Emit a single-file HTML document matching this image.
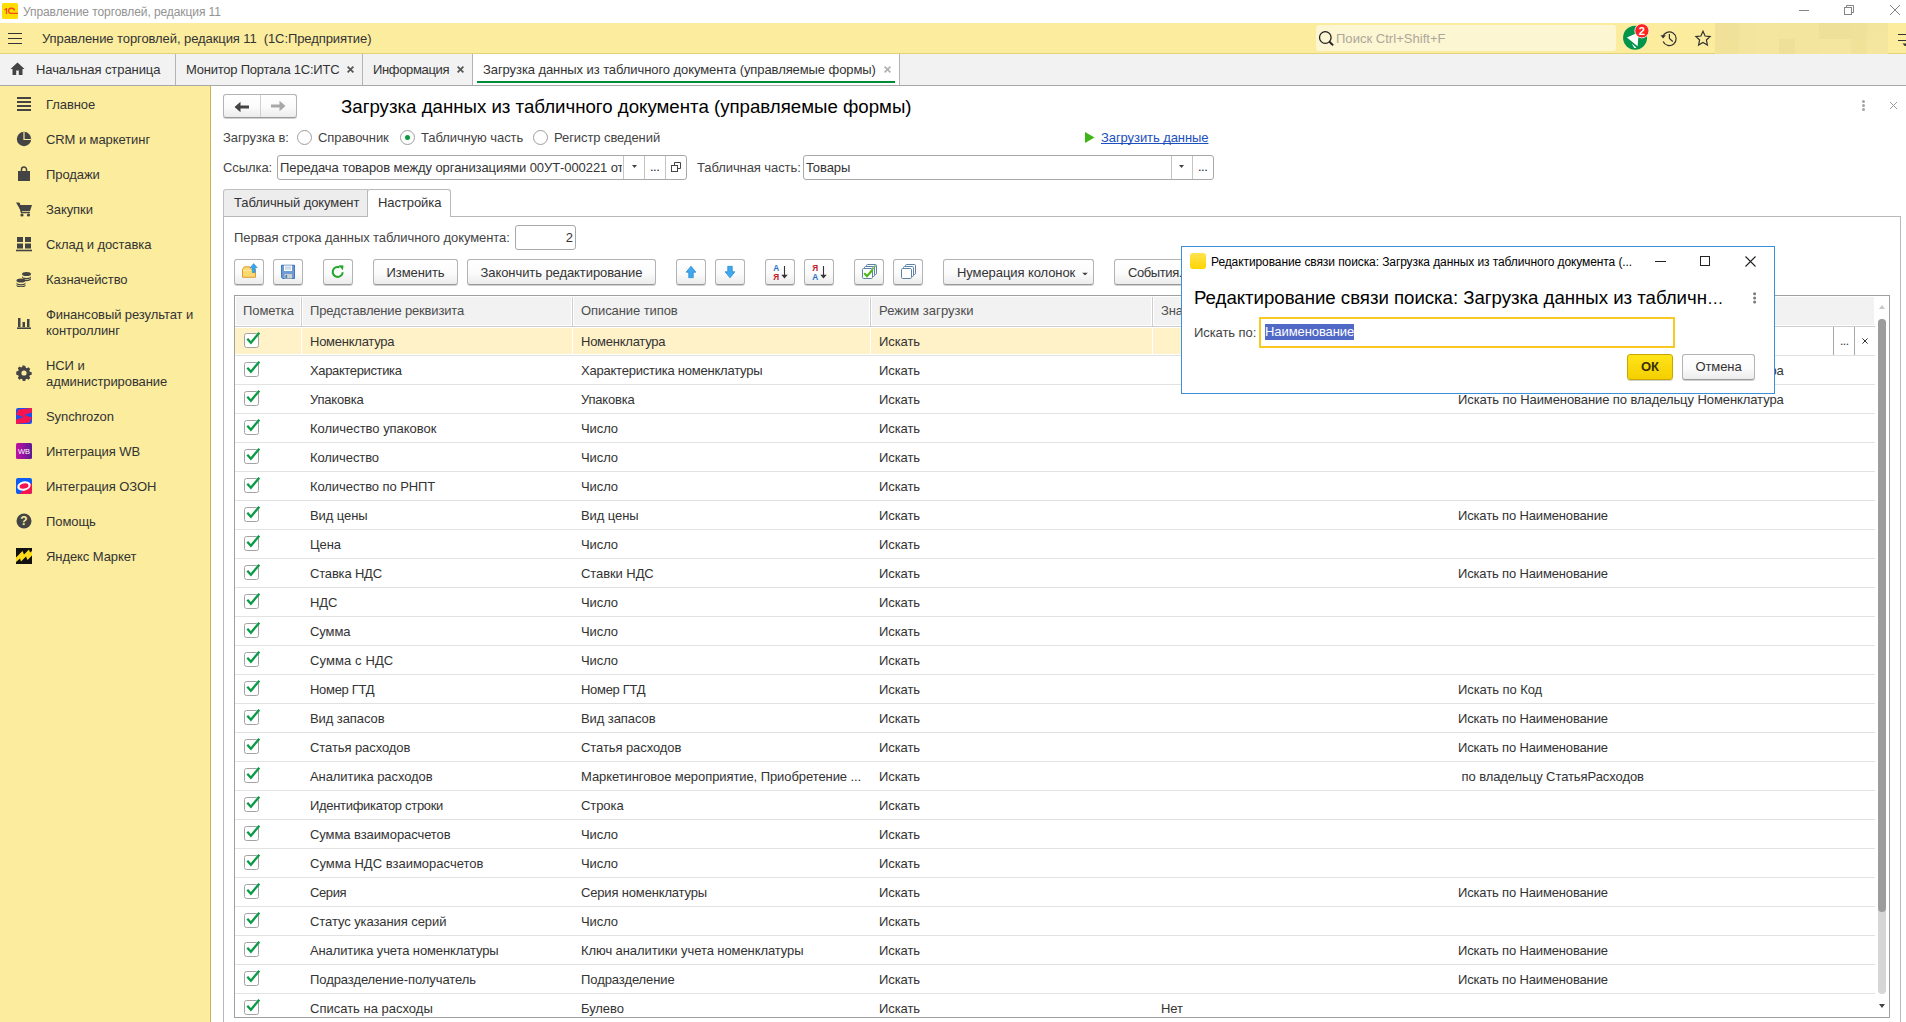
<!DOCTYPE html>
<html lang="ru">
<head>
<meta charset="utf-8">
<title>Управление торговлей, редакция 11</title>
<style>
*{box-sizing:border-box;margin:0;padding:0}
html,body{width:1906px;height:1022px;overflow:hidden;background:#fff}
body{font-family:"Liberation Sans",sans-serif;font-size:13px;color:#333;position:relative;letter-spacing:-0.08px}
.abs{position:absolute}
/* title bar */
#titlebar{position:absolute;left:0;top:0;width:1906px;height:23px;background:#fff}
#titlebar .ttl{position:absolute;left:23px;top:4px;font-size:12px;color:#939393;line-height:16px;white-space:pre}
/* yellow bar */
#topbar{position:absolute;left:0;top:23px;width:1906px;height:31px;background:#fbec9e;border-bottom:1px solid #e3d27c}
#topbar .name{position:absolute;left:42px;top:8px;line-height:16px;white-space:pre;color:#333}
#search{position:absolute;left:1316px;top:2px;width:300px;height:26px;background:#fdf6d2;border-radius:3px}
#search .ph{position:absolute;left:20px;top:6px;line-height:16px;color:#aca79a;letter-spacing:0.03px}
/* tabs bar */
#tabs{position:absolute;left:0;top:54px;width:1906px;height:32px;background:#f2f2f2;border-bottom:1px solid #a8a8a8}
#tabs .tab{position:absolute;top:0;height:31px;border-right:1px solid #b4b4b4;line-height:31px;white-space:pre;color:#333}
#tabs .tab .x{position:absolute;top:0;font-size:13px;font-weight:bold;color:#555}
/* sidebar */
#side{position:absolute;left:0;top:86px;width:211px;height:936px;background:#fbec9e;border-right:1px solid #c9b458}
.si{position:absolute;left:0;width:210px;height:40px}
.si .ic{position:absolute;left:16px;top:11px;width:17px;height:16px}
.si .ic svg{display:block}
.si .st{position:absolute;left:46px;top:0;height:40px;display:flex;align-items:center;line-height:16px;color:#333;white-space:nowrap}
/* main */
#main{position:absolute;left:211px;top:86px;width:1695px;height:936px;background:#fff}
.btn{position:absolute;height:25px;border:1px solid #b3b3b3;border-bottom-color:#9a9a9a;border-radius:3px;background:linear-gradient(#fff 0%,#fbfbfb 55%,#ececec 100%);box-shadow:0 1px 0 rgba(0,0,0,.18);text-align:center;line-height:23px;color:#333;white-space:pre}
.btn svg{position:absolute;left:50%;top:50%;transform:translate(-50%,-50%)}
.lbl{position:absolute;line-height:16px;white-space:pre;color:#444}
.inp{position:absolute;height:25px;border:1px solid #a8a8a8;border-radius:3px;background:#fff}
.inp .v{position:absolute;left:2px;top:4px;line-height:16px;white-space:pre;overflow:hidden;color:#333}
.inp .sep{position:absolute;top:0;width:1px;height:23px;background:#c4c4c4}
.radio{position:absolute;width:15px;height:15px;border:1px solid #9e9e9e;border-radius:50%;background:#fff}
.radio.on::after{content:"";position:absolute;left:4px;top:4px;width:5px;height:5px;border-radius:50%;background:#0a9a3c}
.btn.tb{top:259px;height:26px;line-height:24px;padding-top:1px}
/* table */
#grid{position:absolute;left:234px;top:295px;width:1656px;height:723px;border:1px solid #a0a0a0;background:#fff}
.hc{position:absolute;top:297px;height:28px;background:#f2f2f2}
.hc span{position:absolute;top:6px;line-height:16px;color:#4d4d4d;white-space:pre}
.tr{position:absolute;left:235px;width:1640px;height:29px;border-bottom:1px solid #e2e2e2}
.tr.last{height:23px;border-bottom:none;overflow:hidden}
.tr .sb{position:absolute;top:1px;height:26px;background:#fff2c8}
.tr .c{position:absolute;top:0;height:28px}
.tr .c.t{top:7px;line-height:16px;white-space:pre;color:#333}
.tr .ck{position:absolute;left:0;top:0}
/* dialog */
#dlg{position:absolute;left:1181px;top:246px;width:594px;height:148px;background:#fff;border:1px solid #3c8fd9}
</style>
</head>
<body>

<!-- ===== OS title bar ===== -->
<div id="titlebar">
  <svg class="abs" style="left:2px;top:3px" width="16" height="16" viewBox="0 0 16 16"><rect width="16" height="16" rx="1.500" fill="#ffdd00"/><path d="M2.300 6.400L4.100 4.900h1V11H3.800V6.700l-1.500 .900z" fill="#f4481c"/><path d="M12.500 7.600A3 2.600 0 1 0 9.600 10.450H16" fill="none" stroke="#f4481c" stroke-width="1.300"/></svg>
  <span class="ttl">Управление торговлей, редакция 11</span>
  <svg class="abs" style="left:1799px;top:5px" width="12" height="12" viewBox="0 0 12 12"><path d="M0 5.500h10" stroke="#858585" stroke-width="1"/></svg>
  <svg class="abs" style="left:1843px;top:4px" width="12" height="12" viewBox="0 0 12 12"><path d="M3.500 3.500V1.500h7v7H8.500" fill="none" stroke="#858585"/><rect x="1.500" y="3.500" width="7" height="7" fill="none" stroke="#858585"/></svg>
  <svg class="abs" style="left:1889px;top:4px" width="12" height="12" viewBox="0 0 12 12"><path d="M1 1l10 10M11 1L1 11" stroke="#858585" stroke-width="1"/></svg>
</div>

<!-- ===== application bar ===== -->
<div id="topbar">
  <svg class="abs" style="left:8px;top:9px" width="15" height="13" viewBox="0 0 15 13"><path d="M0 1.500h14M0 6.500h14M0 11.500h14" stroke="#333" stroke-width="1.200"/></svg>
  <span class="name">Управление торговлей, редакция 11  (1С:Предприятие)</span>
  <div id="search">
    <svg class="abs" style="left:2px;top:5px" width="17" height="17" viewBox="0 0 17 17"><circle cx="7.300" cy="7.500" r="5.800" fill="none" stroke="#222" stroke-width="1.300"/><path d="M11.500 11.800l3.600 3.600" stroke="#222" stroke-width="2"/></svg>
    <span class="ph">Поиск Ctrl+Shift+F</span>
  </div>
  <svg class="abs" style="left:1622px;top:0px" width="28" height="30" viewBox="0 0 28 30"><circle cx="13.050" cy="14.800" r="12" fill="#00954a"/><path d="M4.900 14.600L16.800 9.300l-1.200 13.900z" fill="#fff"/><path d="M9.900 21.100l2.400 3.900 2.200-.300-3.800-3.400z" fill="#fff"/><circle cx="19.900" cy="7.800" r="7.100" fill="#ff2222" stroke="#fff" stroke-width=".800"/><text x="19.900" y="12.100" font-family="Liberation Sans, sans-serif" font-size="11.200" font-weight="bold" fill="#fff" text-anchor="middle">2</text></svg>
  <svg class="abs" style="left:1660px;top:6px" width="19" height="19" viewBox="0 0 19 19"><path d="M2.800 7.800A6.800 6.800 0 1 1 3.100 12.600" fill="none" stroke="#333" stroke-width="1.200"/><path d="M0.500 6.200h5.400l-2.800 3.400z" fill="#333"/><path d="M9.400 5v4.500l3.400 3" fill="none" stroke="#333" stroke-width="1.200"/></svg>
  <svg class="abs" style="left:1694px;top:6px" width="18" height="18" viewBox="0 0 18 18"><path d="M9 2.300l2.100 4.700 5 .550-3.700 3.400 1 5L9 13.400l-4.400 2.550 1-5-3.700-3.400 5-.550z" fill="none" stroke="#333" stroke-width="1.200" stroke-linejoin="miter"/></svg>
  <div class="abs" style="left:1715px;top:0;width:173px;height:32px;background:#f1e29a;overflow:hidden"><i style="position:absolute;left:0px;top:0;width:24px;height:16px;background:#f0e19a"></i><i style="position:absolute;left:0px;top:16px;width:24px;height:16px;background:#f1e29a"></i><i style="position:absolute;left:24px;top:0;width:16px;height:16px;background:#f3e59d"></i><i style="position:absolute;left:24px;top:16px;width:16px;height:16px;background:#f3e59d"></i><i style="position:absolute;left:40px;top:0;width:24px;height:16px;background:#f4e69e"></i><i style="position:absolute;left:40px;top:16px;width:24px;height:16px;background:#f4e69e"></i><i style="position:absolute;left:64px;top:0;width:16px;height:16px;background:#f3e59d"></i><i style="position:absolute;left:64px;top:16px;width:16px;height:16px;background:#efe099"></i><i style="position:absolute;left:80px;top:0;width:24px;height:16px;background:#f3e59d"></i><i style="position:absolute;left:80px;top:16px;width:24px;height:16px;background:#f3e59d"></i><i style="position:absolute;left:104px;top:0;width:32px;height:16px;background:#efe099"></i><i style="position:absolute;left:104px;top:16px;width:32px;height:16px;background:#f4e69e"></i><i style="position:absolute;left:136px;top:0;width:16px;height:16px;background:#f0e19a"></i><i style="position:absolute;left:136px;top:16px;width:16px;height:16px;background:#f1e29a"></i><i style="position:absolute;left:152px;top:0;width:32px;height:16px;background:#f3e59d"></i><i style="position:absolute;left:152px;top:16px;width:32px;height:16px;background:#f4e69e"></i></div>
  <svg class="abs" style="left:1898px;top:10px" width="8" height="14" viewBox="0 0 8 14"><path d="M0 1.500h8M0 7.500h8" stroke="#333" stroke-width="1.100"/><path d="M4.500 10.500h3.500v2.500h-1.200z" fill="#333"/></svg>
</div>

<!-- ===== open-windows tab bar ===== -->
<div id="tabs">
  <div class="tab" style="left:0;width:176px"><svg class="abs" style="left:10px;top:8px" width="15" height="14" viewBox="0 0 15 14"><path d="M7.500 0.500L0.500 7h2v6h3.700V8.500h2.600V13h3.700V7h2z" fill="#444"/></svg><span class="abs" style="left:36px">Начальная страница</span></div>
  <div class="tab" style="left:176px;width:187px"><span class="abs" style="left:10px;letter-spacing:-0.230px">Монитор Портала 1С:ИТС</span><svg class="abs" style="left:171px;top:12px" width="7" height="7" viewBox="0 0 7 7"><path d="M0.600 0.600l5.800 5.800M6.400 0.600L0.600 6.400" stroke="#555" stroke-width="1.700"/></svg></div>
  <div class="tab" style="left:363px;width:110px"><span class="abs" style="left:10px;letter-spacing:-0.350px">Информация</span><svg class="abs" style="left:94px;top:12px" width="7" height="7" viewBox="0 0 7 7"><path d="M0.600 0.600l5.800 5.800M6.400 0.600L0.600 6.400" stroke="#555" stroke-width="1.700"/></svg></div>
  <div class="tab" style="left:473px;width:427px;background:#fff"><span class="abs" style="left:10px">Загрузка данных из табличного документа (управляемые формы)</span><svg class="abs" style="left:411px;top:12px" width="7" height="7" viewBox="0 0 7 7"><path d="M0.600 0.600l5.800 5.800M6.400 0.600L0.600 6.400" stroke="#b2b2b2" stroke-width="1.700"/></svg><div class="abs" style="left:4px;top:27px;width:418px;height:2px;background:#008c37"></div></div>
</div>

<!-- ===== section sidebar ===== -->
<div id="side">
<div class="si" style="top:-1px"><span class="ic"><svg width="16" height="16" viewBox="0 0 16 16"><path d="M1 2h14M1 6h14M1 10h14M1 14h14" stroke="#444" stroke-width="2"/></svg></span><span class="st">Главное</span></div>
<div class="si" style="top:34px"><span class="ic"><svg width="16" height="16" viewBox="0 0 16 16"><circle cx="8" cy="8" r="7.200" fill="#444"/><path d="M8 1v7.500h7" fill="none" stroke="#fbec9e" stroke-width="1.200"/></svg></span><span class="st">CRM и маркетинг</span></div>
<div class="si" style="top:69px"><span class="ic"><svg width="16" height="16" viewBox="0 0 16 16"><path d="M2 5h12v10H2z" fill="#444"/><path d="M5.5 7V3.5a2.5 2.5 0 0 1 5 0V7" fill="none" stroke="#444" stroke-width="1.5"/></svg></span><span class="st">Продажи</span></div>
<div class="si" style="top:104px"><span class="ic"><svg width="17" height="16" viewBox="0 0 17 16"><path d="M0 1.5h3l1 2.5h12l-2 6H5z" fill="#444"/><path d="M3 2l2.5 9.5H14" fill="none" stroke="#444" stroke-width="1.5"/><circle cx="6" cy="14" r="1.6" fill="#444"/><circle cx="12.5" cy="14" r="1.6" fill="#444"/></svg></span><span class="st">Закупки</span></div>
<div class="si" style="top:139px"><span class="ic"><svg width="16" height="16" viewBox="0 0 16 16"><path d="M1 1h6v5H1zM9 1h6v5H9zM1 7.5h6v5H1zM9 7.5h6v5H9z" fill="#444"/><path d="M0 14.5h16" stroke="#444" stroke-width="1.6"/></svg></span><span class="st">Склад и доставка</span></div>
<div class="si" style="top:174px"><span class="ic"><svg width="16" height="16" viewBox="0 0 16 16"><g fill="#444"><ellipse cx="10.5" cy="3" rx="4.5" ry="2"/><path d="M6 5c0 1.1 2 2 4.5 2S15 6.100 15 5v1.200c0 1.100-2 2-4.500 2S6 7.300 6 6.200z"/><path d="M9 8.800c2.500.3 6-.5 6-1.800v1.300c0 1.300-3 2.200-6 1.800z"/><ellipse cx="5" cy="9.500" rx="4.500" ry="2"/><path d="M.5 11.200c0 1.100 2 2 4.500 2s4.500-.9 4.500-2v1.300c0 1.100-2 2-4.500 2s-4.500-.9-4.500-2z"/><path d="M.5 13.800c0 1.100 2 2 4.500 2s4.500-.9 4.500-2V15c0 1.100-2 2-4.500 2S.5 16.100.5 15z" transform="translate(0 -0.500)"/></g></svg></span><span class="st">Казначейство</span></div>
<div class="si" style="top:217px"><span class="ic"><svg width="16" height="16" viewBox="0 0 16 16"><path d="M2 4h2.500v9H2zM6.500 8h2.500v5H6.500zM11 5h2.500v8H11z" fill="#444"/><path d="M1 14.200h14" stroke="#444" stroke-width="1.600"/></svg></span><span class="st">Финансовый результат и<br>контроллинг</span></div>
<div class="si" style="top:268px"><span class="ic"><svg width="16" height="16" viewBox="-0.6 -0.6 17.2 17.2"><path d="M8 0.500l1.300 0 .5 2 1.300.6 1.800-1 1.800 1.800-1 1.800.6 1.300 2 .5v2.600l-2 .5-.6 1.300 1 1.800-1.800 1.800-1.800-1-1.300.6-.5 2H6.700l-.5-2-1.300-.6-1.800 1-1.800-1.800 1-1.800-.6-1.300-2-.5V6.700l2-.5.6-1.300-1-1.800 1.800-1.800 1.800 1 1.300-.6.5-2z" fill="#444" transform="translate(0 -0.300)"/><circle cx="8" cy="8" r="2.800" fill="#fbec9e"/></svg></span><span class="st">НСИ и<br>администрирование</span></div>
<div class="si" style="top:311px"><span class="ic"><svg width="16" height="16" viewBox="0 0 16 16"><rect width="16" height="16" rx="2" fill="#1553f0"/><path d="M2.5 1.5L16 0v4.5L8.5 7 16 9.5l-2.5 5L0 16v-4.5L7.5 9 0 6.5z" fill="#f5144f"/></svg></span><span class="st">Synchrozon</span></div>
<div class="si" style="top:346px"><span class="ic"><svg width="16" height="16" viewBox="0 0 16 16"><defs><linearGradient id="wbg" x1="0" y1="0" x2="1" y2="0"><stop offset="0" stop-color="#c20fa3"/><stop offset="1" stop-color="#5a1a96"/></linearGradient></defs><rect width="16" height="16" rx="1.500" fill="url(#wbg)"/><text x="8" y="11" font-family="Liberation Sans, sans-serif" font-size="7.5" fill="#fff" text-anchor="middle">WB</text></svg></span><span class="st">Интеграция WB</span></div>
<div class="si" style="top:381px"><span class="ic"><svg width="16" height="16" viewBox="0 0 16 16"><rect width="16" height="16" rx="2" fill="#0d5cf5"/><path d="M16 5v9a2 2 0 0 1-2 2H3z" fill="#f5144f"/><ellipse cx="8" cy="8" rx="6.8" ry="4.6" fill="#fff" transform="rotate(-14 8 8)"/><ellipse cx="8" cy="8" rx="4.6" ry="2.6" fill="#f5144f" transform="rotate(-14 8 8)"/></svg></span><span class="st">Интеграция ОЗОН</span></div>
<div class="si" style="top:416px"><span class="ic"><svg width="16" height="16" viewBox="0 0 16 16"><circle cx="8" cy="8" r="7.500" fill="#444"/><text x="8" y="12.300" font-family="Liberation Sans, sans-serif" font-size="12" font-weight="bold" fill="#fbec9e" text-anchor="middle">?</text></svg></span><span class="st">Помощь</span></div>
<div class="si" style="top:451px"><span class="ic"><svg width="16" height="16" viewBox="0 0 16 16"><rect width="16" height="16" fill="#111"/><path d="M0 9.5L6.5 3l1.500 3.500L13 1.500l1 3 2-1.500v4.500L11.500 12 10 8.500 5 13.500 4 10.500 0 14z" fill="#ffdd1a"/></svg></span><span class="st">Яндекс Маркет</span></div>
</div>

<!-- ===== main work area ===== -->
<div id="main"></div>

<!-- nav buttons + title -->
<div class="btn" style="left:223px;top:94px;width:74px;height:24px">
  <svg style="left:18px;top:12px" width="16" height="12" viewBox="0 0 16 12"><path d="M0.500 6L6.500 0.800V4.500H15v3H6.500v3.700z" fill="#444"/></svg>
  <div class="abs" style="left:36px;top:0;width:1px;height:22px;background:#d0d0d0"></div>
  <svg style="left:54px" width="16" height="12" viewBox="0 0 16 12"><path d="M15.500 6L9.500 0.800V4.500H1v3h8.500v3.700z" fill="#a8a8a8"/></svg>
</div>
<div class="lbl" style="left:341px;top:95px;font-size:18.670px;line-height:24px;color:#000;letter-spacing:0">Загрузка данных из табличного документа (управляемые формы)</div>
<svg class="abs" style="left:1861px;top:99px" width="5" height="13" viewBox="0 0 5 13"><circle cx="2.500" cy="2.500" r="1.500" fill="#a3a3a3"/><circle cx="2.500" cy="6.500" r="1.500" fill="#a3a3a3"/><circle cx="2.500" cy="10.600" r="1.500" fill="#a3a3a3"/></svg>
<svg class="abs" style="left:1889px;top:101px" width="9" height="9" viewBox="0 0 9 9"><path d="M1 1l7 7M8 1L1 8" stroke="#9a9a9a" stroke-width="1"/></svg>

<!-- row: Загрузка в -->
<div class="lbl" style="left:223px;top:130px">Загрузка в:</div>
<div class="radio" style="left:297px;top:130px"></div><div class="lbl" style="left:318px;top:130px">Справочник</div>
<div class="radio on" style="left:400px;top:130px"></div><div class="lbl" style="left:421px;top:130px">Табличную часть</div>
<div class="radio" style="left:533px;top:130px"></div><div class="lbl" style="left:554px;top:130px">Регистр сведений</div>
<svg class="abs" style="left:1085px;top:132px" width="10" height="11" viewBox="0 0 10 11"><path d="M0 0l9.500 5.500L0 11z" fill="#3db516"/></svg>
<div class="lbl" style="left:1101px;top:130px;color:#1b4fbd;text-decoration:underline;text-decoration-skip-ink:none">Загрузить данные</div>

<!-- row: Ссылка / Табличная часть -->
<div class="lbl" style="left:223px;top:160px">Ссылка:</div>
<div class="inp" style="left:277px;top:155px;width:410px">
  <span class="v" style="width:342px">Передача товаров между организациями 00УТ-000221 от 14.06.2023</span>
  <div class="sep" style="left:345px"></div><svg class="abs" style="left:354px;top:9px" width="5" height="3" viewBox="0 0 5 3"><path d="M0 0h5L2.500 3z" fill="#444"/></svg>
  <div class="sep" style="left:366px"></div><span class="abs" style="left:372px;top:3px;line-height:16px;color:#222;letter-spacing:-0.5px">...</span>
  <div class="sep" style="left:387px"></div><svg class="abs" style="left:393px;top:6px" width="10" height="10" viewBox="0 0 10 10"><path d="M3.500 3.500V0.500h6v6h-3" fill="none" stroke="#444"/><rect x="0.500" y="3.500" width="6" height="6" fill="#fff" stroke="#444"/></svg>
</div>
<div class="lbl" style="left:697px;top:160px">Табличная часть:</div>
<div class="inp" style="left:803px;top:155px;width:411px">
  <span class="v">Товары</span>
  <div class="sep" style="left:367px"></div><svg class="abs" style="left:375px;top:9px" width="5" height="3" viewBox="0 0 5 3"><path d="M0 0h5L2.500 3z" fill="#444"/></svg>
  <div class="sep" style="left:388px"></div><span class="abs" style="left:394px;top:3px;line-height:16px;color:#222;letter-spacing:-0.5px">...</span>
</div>

<!-- form pages (tabs) -->
<div class="abs" style="left:223px;top:216px;width:1678px;height:806px;border:1px solid #b8b8b8;border-bottom:none"></div>
<div class="abs" style="left:223px;top:189px;width:145px;height:28px;background:#ededed;border:1px solid #c0c0c0;border-bottom-color:#b8b8b8;border-radius:3px 0 0 0;line-height:26px;padding-left:10px;color:#333">Табличный документ</div>
<div class="abs" style="left:367px;top:189px;width:84px;height:28px;background:#fff;border:1px solid #b8b8b8;border-bottom:none;border-radius:3px 3px 0 0;line-height:26px;padding-left:10px;color:#333">Настройка</div>

<div class="lbl" style="left:234px;top:230px">Первая строка данных табличного документа:</div>
<div class="inp" style="left:515px;top:225px;width:61px"><span class="abs" style="right:2px;top:4px;line-height:16px">2</span></div>

<!-- command bar -->
<div class="btn tb" style="left:234px;width:30px"><svg width="18" height="18" viewBox="0 0 18 18"><path d="M2.500 14.300V6.300L4.400 3.800h5.400l1.700 2.500h4v8z" fill="#fbd96c" stroke="#dd9a3c" stroke-linejoin="round"/><path d="M3 7.300h12" stroke="#fde9a6" stroke-width="1"/><path d="M13.700 0.600l3.500 4.100h-2.100v4.800h-2.800V4.700h-2.100z" fill="#37a5f0" stroke="#2389d2" stroke-width=".600" stroke-linejoin="round"/></svg></div>
<div class="btn tb" style="left:273px;width:30px"><svg width="14" height="15" viewBox="0 0 14 15"><path d="M0.500 0.500h13v13.500H1.500l-1-1z" fill="#6d9bd6" stroke="#4676b4"/><rect x="3" y="1" width="8" height="5.500" fill="#fff"/><path d="M4 2.700h6M4 4.500h6" stroke="#8fb0dc" stroke-width=".8"/><rect x="3.500" y="9.500" width="7.500" height="4.500" fill="#c9d1d0"/><rect x="4.500" y="10.500" width="1.600" height="3" fill="#4676b4"/></svg></div>
<div class="btn tb" style="left:323px;width:30px"><svg width="14" height="14" viewBox="0 0 14 14"><path d="M11.700 7.200A5 5 0 1 1 8.600 2.300" fill="none" stroke="#22a52a" stroke-width="2"/><path d="M7.500 0.300l5 .2-.6 4.800z" fill="#22a52a"/></svg></div>
<div class="btn tb" style="left:373px;width:85px">Изменить</div>
<div class="btn tb" style="left:467px;width:189px">Закончить редактирование</div>
<div class="btn tb" style="left:676px;width:30px"><svg width="11" height="13" viewBox="0 0 11 13"><path d="M5.500 0.700l4.900 6H7.700v5.600H3.300V6.700H.6z" fill="#3fa9f0" stroke="#2a88cc" stroke-width=".800" stroke-linejoin="round"/></svg></div>
<div class="btn tb" style="left:715px;width:30px"><svg width="11" height="13" viewBox="0 0 11 13"><path d="M5.500 12.300l4.900-6H7.700V.700H3.300v5.600H.6z" fill="#3fa9f0" stroke="#2a88cc" stroke-width=".800" stroke-linejoin="round"/></svg></div>
<div class="btn tb" style="left:765px;width:30px"><svg style="margin-left:1px" width="16" height="17" viewBox="0 0 16 17"><text x="0.300" y="7.200" font-family="Liberation Sans, sans-serif" font-size="8.200" font-weight="bold" fill="#1f72c4">А</text><text x="0.300" y="16.500" font-family="Liberation Sans, sans-serif" font-size="8.200" font-weight="bold" fill="#bf1a2c">Я</text><path d="M11.500 2.500v11" stroke="#333" stroke-width="1.100"/><path d="M8.300 11.300h6.400l-3.200 3.700z" fill="#333"/></svg></div>
<div class="btn tb" style="left:804px;width:30px"><svg style="margin-left:1px" width="16" height="17" viewBox="0 0 16 17"><text x="0.300" y="7.200" font-family="Liberation Sans, sans-serif" font-size="8.200" font-weight="bold" fill="#bf1a2c">Я</text><text x="0.300" y="16.500" font-family="Liberation Sans, sans-serif" font-size="8.200" font-weight="bold" fill="#1f72c4">А</text><path d="M11.500 2.500v11" stroke="#333" stroke-width="1.100"/><path d="M8.300 11.300h6.400l-3.200 3.700z" fill="#333"/></svg></div>
<div class="btn tb" style="left:854px;width:30px"><svg width="16" height="16" viewBox="0 0 16 16"><rect x="5.500" y="0.500" width="10" height="10" rx="1.200" fill="#fff" stroke="#5d82a3"/><path d="M11 6l3.500-4.500" stroke="#6cc04a" stroke-width="2"/><rect x="3.500" y="2.500" width="10" height="10" rx="1.200" fill="#fff" stroke="#5d82a3"/><path d="M9.500 7.500l3-4" stroke="#6cc04a" stroke-width="2"/><rect x="1.500" y="4.500" width="10" height="10" rx="1.200" fill="#fff" stroke="#5d82a3"/><path d="M3.200 9.300l2.800 2.800 5.600-6.400" fill="none" stroke="#4cb81e" stroke-width="2.200"/></svg></div>
<div class="btn tb" style="left:893px;width:30px"><svg width="16" height="16" viewBox="0 0 16 16"><rect x="5.500" y="0.500" width="10" height="10" rx="1.200" fill="#fff" stroke="#5d82a3"/><rect x="3.500" y="2.500" width="10" height="10" rx="1.200" fill="#fff" stroke="#5d82a3"/><rect x="1.500" y="4.500" width="10" height="10" rx="1.200" fill="#fff" stroke="#5d82a3"/></svg></div>
<div class="btn tb" style="left:943px;width:151px;text-align:left;padding-left:13px">Нумерация колонок<svg style="left:141px;top:14px" width="6" height="3" viewBox="0 0 6 3"><path d="M0 0h6L3 3z" fill="#444"/></svg></div>
<div class="btn tb" style="left:1114px;width:90px;text-align:left;padding-left:13px;letter-spacing:-0.400px">События...</div>

<!-- table -->
<div id="grid"></div>
<div class="hc" style="left:236px;width:64px"><span style="left:7px">Пометка</span></div>
<div class="hc" style="left:303px;width:268px"><span style="left:7px;letter-spacing:-0.170px">Представление реквизита</span></div>
<div class="hc" style="left:574px;width:295px"><span style="left:7px">Описание типов</span></div>
<div class="hc" style="left:872px;width:279px"><span style="left:7px;letter-spacing:0.030px">Режим загрузки</span></div>
<div class="hc" style="left:1154px;width:295px"><span style="left:7px">Значение по умолчанию</span></div>
<div class="hc" style="left:1452px;width:422px"><span style="left:7px">Связь поиска</span></div>
<div class="abs" style="left:301px;top:297px;width:1px;height:29px;background:#cdcdcd"></div>
<div class="abs" style="left:572px;top:297px;width:1px;height:29px;background:#cdcdcd"></div>
<div class="abs" style="left:870px;top:297px;width:1px;height:29px;background:#cdcdcd"></div>
<div class="abs" style="left:1152px;top:297px;width:1px;height:29px;background:#cdcdcd"></div>
<div class="abs" style="left:1450px;top:297px;width:1px;height:29px;background:#cdcdcd"></div>
<div class="abs" style="left:235px;top:326px;width:1640px;height:1px;background:#cdcdcd"></div>
<div class="tr" style="top:327px"><i class="sb" style="left:0px;width:66px"></i><i class="sb" style="left:67px;width:270px"></i><i class="sb" style="left:338px;width:297px"></i><i class="sb" style="left:636px;width:281px"></i><i class="sb" style="left:918px;width:297px"></i><span class="c" style="left:9px;top:4px"><svg class="ck" width="18" height="18" viewBox="0 0 18 18"><rect x="0.500" y="2.500" width="14" height="14" rx="2" fill="#fff" stroke="#a3a3a3"/><path d="M3.300 7.700 L6.900 11.800 L15.300 1.700" fill="none" stroke="#0b9a47" stroke-width="2.300"/></svg></span><span class="c t" style="left:75px"><span style="letter-spacing:-0.247px">Номенклатура</span></span><span class="c t" style="left:346px"><span style="letter-spacing:-0.247px">Номенклатура</span></span><span class="c t" style="left:644px">Искать</span><span class="c t" style="left:926px"></span><span class="c t" style="left:1223px"></span></div>
<div class="tr" style="top:356px"><span class="c" style="left:9px;top:4px"><svg class="ck" width="18" height="18" viewBox="0 0 18 18"><rect x="0.500" y="2.500" width="14" height="14" rx="2" fill="#fff" stroke="#a3a3a3"/><path d="M3.300 7.700 L6.900 11.800 L15.300 1.700" fill="none" stroke="#0b9a47" stroke-width="2.300"/></svg></span><span class="c t" style="left:75px"><span style="letter-spacing:-0.366px">Характеристика</span></span><span class="c t" style="left:346px"><span style="letter-spacing:-0.228px">Характеристика номенклатуры</span></span><span class="c t" style="left:644px">Искать</span><span class="c t" style="left:926px"></span><span class="c t" style="left:1223px">Искать по Наименование по владельцу Номенклатура</span></div>
<div class="tr" style="top:385px"><span class="c" style="left:9px;top:4px"><svg class="ck" width="18" height="18" viewBox="0 0 18 18"><rect x="0.500" y="2.500" width="14" height="14" rx="2" fill="#fff" stroke="#a3a3a3"/><path d="M3.300 7.700 L6.900 11.800 L15.300 1.700" fill="none" stroke="#0b9a47" stroke-width="2.300"/></svg></span><span class="c t" style="left:75px"><span style="letter-spacing:-0.205px">Упаковка</span></span><span class="c t" style="left:346px"><span style="letter-spacing:-0.205px">Упаковка</span></span><span class="c t" style="left:644px">Искать</span><span class="c t" style="left:926px"></span><span class="c t" style="left:1223px">Искать по Наименование по владельцу Номенклатура</span></div>
<div class="tr" style="top:414px"><span class="c" style="left:9px;top:4px"><svg class="ck" width="18" height="18" viewBox="0 0 18 18"><rect x="0.500" y="2.500" width="14" height="14" rx="2" fill="#fff" stroke="#a3a3a3"/><path d="M3.300 7.700 L6.900 11.800 L15.300 1.700" fill="none" stroke="#0b9a47" stroke-width="2.300"/></svg></span><span class="c t" style="left:75px"><span style="letter-spacing:-0.027px">Количество упаковок</span></span><span class="c t" style="left:346px">Число</span><span class="c t" style="left:644px">Искать</span><span class="c t" style="left:926px"></span><span class="c t" style="left:1223px"></span></div>
<div class="tr" style="top:443px"><span class="c" style="left:9px;top:4px"><svg class="ck" width="18" height="18" viewBox="0 0 18 18"><rect x="0.500" y="2.500" width="14" height="14" rx="2" fill="#fff" stroke="#a3a3a3"/><path d="M3.300 7.700 L6.900 11.800 L15.300 1.700" fill="none" stroke="#0b9a47" stroke-width="2.300"/></svg></span><span class="c t" style="left:75px">Количество</span><span class="c t" style="left:346px">Число</span><span class="c t" style="left:644px">Искать</span><span class="c t" style="left:926px"></span><span class="c t" style="left:1223px"></span></div>
<div class="tr" style="top:472px"><span class="c" style="left:9px;top:4px"><svg class="ck" width="18" height="18" viewBox="0 0 18 18"><rect x="0.500" y="2.500" width="14" height="14" rx="2" fill="#fff" stroke="#a3a3a3"/><path d="M3.300 7.700 L6.900 11.800 L15.300 1.700" fill="none" stroke="#0b9a47" stroke-width="2.300"/></svg></span><span class="c t" style="left:75px">Количество по РНПТ</span><span class="c t" style="left:346px">Число</span><span class="c t" style="left:644px">Искать</span><span class="c t" style="left:926px"></span><span class="c t" style="left:1223px"></span></div>
<div class="tr" style="top:501px"><span class="c" style="left:9px;top:4px"><svg class="ck" width="18" height="18" viewBox="0 0 18 18"><rect x="0.500" y="2.500" width="14" height="14" rx="2" fill="#fff" stroke="#a3a3a3"/><path d="M3.300 7.700 L6.900 11.800 L15.300 1.700" fill="none" stroke="#0b9a47" stroke-width="2.300"/></svg></span><span class="c t" style="left:75px">Вид цены</span><span class="c t" style="left:346px">Вид цены</span><span class="c t" style="left:644px">Искать</span><span class="c t" style="left:926px"></span><span class="c t" style="left:1223px"><span style="letter-spacing:-0.148px">Искать по Наименование</span></span></div>
<div class="tr" style="top:530px"><span class="c" style="left:9px;top:4px"><svg class="ck" width="18" height="18" viewBox="0 0 18 18"><rect x="0.500" y="2.500" width="14" height="14" rx="2" fill="#fff" stroke="#a3a3a3"/><path d="M3.300 7.700 L6.900 11.800 L15.300 1.700" fill="none" stroke="#0b9a47" stroke-width="2.300"/></svg></span><span class="c t" style="left:75px">Цена</span><span class="c t" style="left:346px">Число</span><span class="c t" style="left:644px">Искать</span><span class="c t" style="left:926px"></span><span class="c t" style="left:1223px"></span></div>
<div class="tr" style="top:559px"><span class="c" style="left:9px;top:4px"><svg class="ck" width="18" height="18" viewBox="0 0 18 18"><rect x="0.500" y="2.500" width="14" height="14" rx="2" fill="#fff" stroke="#a3a3a3"/><path d="M3.300 7.700 L6.900 11.800 L15.300 1.700" fill="none" stroke="#0b9a47" stroke-width="2.300"/></svg></span><span class="c t" style="left:75px"><span style="letter-spacing:-0.180px">Ставка НДС</span></span><span class="c t" style="left:346px">Ставки НДС</span><span class="c t" style="left:644px">Искать</span><span class="c t" style="left:926px"></span><span class="c t" style="left:1223px"><span style="letter-spacing:-0.148px">Искать по Наименование</span></span></div>
<div class="tr" style="top:588px"><span class="c" style="left:9px;top:4px"><svg class="ck" width="18" height="18" viewBox="0 0 18 18"><rect x="0.500" y="2.500" width="14" height="14" rx="2" fill="#fff" stroke="#a3a3a3"/><path d="M3.300 7.700 L6.900 11.800 L15.300 1.700" fill="none" stroke="#0b9a47" stroke-width="2.300"/></svg></span><span class="c t" style="left:75px">НДС</span><span class="c t" style="left:346px">Число</span><span class="c t" style="left:644px">Искать</span><span class="c t" style="left:926px"></span><span class="c t" style="left:1223px"></span></div>
<div class="tr" style="top:617px"><span class="c" style="left:9px;top:4px"><svg class="ck" width="18" height="18" viewBox="0 0 18 18"><rect x="0.500" y="2.500" width="14" height="14" rx="2" fill="#fff" stroke="#a3a3a3"/><path d="M3.300 7.700 L6.900 11.800 L15.300 1.700" fill="none" stroke="#0b9a47" stroke-width="2.300"/></svg></span><span class="c t" style="left:75px">Сумма</span><span class="c t" style="left:346px">Число</span><span class="c t" style="left:644px">Искать</span><span class="c t" style="left:926px"></span><span class="c t" style="left:1223px"></span></div>
<div class="tr" style="top:646px"><span class="c" style="left:9px;top:4px"><svg class="ck" width="18" height="18" viewBox="0 0 18 18"><rect x="0.500" y="2.500" width="14" height="14" rx="2" fill="#fff" stroke="#a3a3a3"/><path d="M3.300 7.700 L6.900 11.800 L15.300 1.700" fill="none" stroke="#0b9a47" stroke-width="2.300"/></svg></span><span class="c t" style="left:75px"><span style="letter-spacing:0.102px">Сумма с НДС</span></span><span class="c t" style="left:346px">Число</span><span class="c t" style="left:644px">Искать</span><span class="c t" style="left:926px"></span><span class="c t" style="left:1223px"></span></div>
<div class="tr" style="top:675px"><span class="c" style="left:9px;top:4px"><svg class="ck" width="18" height="18" viewBox="0 0 18 18"><rect x="0.500" y="2.500" width="14" height="14" rx="2" fill="#fff" stroke="#a3a3a3"/><path d="M3.300 7.700 L6.900 11.800 L15.300 1.700" fill="none" stroke="#0b9a47" stroke-width="2.300"/></svg></span><span class="c t" style="left:75px"><span style="letter-spacing:-0.302px">Номер ГТД</span></span><span class="c t" style="left:346px"><span style="letter-spacing:-0.302px">Номер ГТД</span></span><span class="c t" style="left:644px">Искать</span><span class="c t" style="left:926px"></span><span class="c t" style="left:1223px">Искать по Код</span></div>
<div class="tr" style="top:704px"><span class="c" style="left:9px;top:4px"><svg class="ck" width="18" height="18" viewBox="0 0 18 18"><rect x="0.500" y="2.500" width="14" height="14" rx="2" fill="#fff" stroke="#a3a3a3"/><path d="M3.300 7.700 L6.900 11.800 L15.300 1.700" fill="none" stroke="#0b9a47" stroke-width="2.300"/></svg></span><span class="c t" style="left:75px">Вид запасов</span><span class="c t" style="left:346px">Вид запасов</span><span class="c t" style="left:644px">Искать</span><span class="c t" style="left:926px"></span><span class="c t" style="left:1223px"><span style="letter-spacing:-0.148px">Искать по Наименование</span></span></div>
<div class="tr" style="top:733px"><span class="c" style="left:9px;top:4px"><svg class="ck" width="18" height="18" viewBox="0 0 18 18"><rect x="0.500" y="2.500" width="14" height="14" rx="2" fill="#fff" stroke="#a3a3a3"/><path d="M3.300 7.700 L6.900 11.800 L15.300 1.700" fill="none" stroke="#0b9a47" stroke-width="2.300"/></svg></span><span class="c t" style="left:75px">Статья расходов</span><span class="c t" style="left:346px">Статья расходов</span><span class="c t" style="left:644px">Искать</span><span class="c t" style="left:926px"></span><span class="c t" style="left:1223px"><span style="letter-spacing:-0.148px">Искать по Наименование</span></span></div>
<div class="tr" style="top:762px"><span class="c" style="left:9px;top:4px"><svg class="ck" width="18" height="18" viewBox="0 0 18 18"><rect x="0.500" y="2.500" width="14" height="14" rx="2" fill="#fff" stroke="#a3a3a3"/><path d="M3.300 7.700 L6.900 11.800 L15.300 1.700" fill="none" stroke="#0b9a47" stroke-width="2.300"/></svg></span><span class="c t" style="left:75px">Аналитика расходов</span><span class="c t" style="left:346px">Маркетинговое мероприятие, Приобретение ...</span><span class="c t" style="left:644px">Искать</span><span class="c t" style="left:926px"></span><span class="c t" style="left:1223px"> по владельцу СтатьяРасходов</span></div>
<div class="tr" style="top:791px"><span class="c" style="left:9px;top:4px"><svg class="ck" width="18" height="18" viewBox="0 0 18 18"><rect x="0.500" y="2.500" width="14" height="14" rx="2" fill="#fff" stroke="#a3a3a3"/><path d="M3.300 7.700 L6.900 11.800 L15.300 1.700" fill="none" stroke="#0b9a47" stroke-width="2.300"/></svg></span><span class="c t" style="left:75px"><span style="letter-spacing:-0.305px">Идентификатор строки</span></span><span class="c t" style="left:346px">Строка</span><span class="c t" style="left:644px">Искать</span><span class="c t" style="left:926px"></span><span class="c t" style="left:1223px"></span></div>
<div class="tr" style="top:820px"><span class="c" style="left:9px;top:4px"><svg class="ck" width="18" height="18" viewBox="0 0 18 18"><rect x="0.500" y="2.500" width="14" height="14" rx="2" fill="#fff" stroke="#a3a3a3"/><path d="M3.300 7.700 L6.900 11.800 L15.300 1.700" fill="none" stroke="#0b9a47" stroke-width="2.300"/></svg></span><span class="c t" style="left:75px">Сумма взаиморасчетов</span><span class="c t" style="left:346px">Число</span><span class="c t" style="left:644px">Искать</span><span class="c t" style="left:926px"></span><span class="c t" style="left:1223px"></span></div>
<div class="tr" style="top:849px"><span class="c" style="left:9px;top:4px"><svg class="ck" width="18" height="18" viewBox="0 0 18 18"><rect x="0.500" y="2.500" width="14" height="14" rx="2" fill="#fff" stroke="#a3a3a3"/><path d="M3.300 7.700 L6.900 11.800 L15.300 1.700" fill="none" stroke="#0b9a47" stroke-width="2.300"/></svg></span><span class="c t" style="left:75px"><span style="letter-spacing:0.003px">Сумма НДС взаиморасчетов</span></span><span class="c t" style="left:346px">Число</span><span class="c t" style="left:644px">Искать</span><span class="c t" style="left:926px"></span><span class="c t" style="left:1223px"></span></div>
<div class="tr" style="top:878px"><span class="c" style="left:9px;top:4px"><svg class="ck" width="18" height="18" viewBox="0 0 18 18"><rect x="0.500" y="2.500" width="14" height="14" rx="2" fill="#fff" stroke="#a3a3a3"/><path d="M3.300 7.700 L6.900 11.800 L15.300 1.700" fill="none" stroke="#0b9a47" stroke-width="2.300"/></svg></span><span class="c t" style="left:75px"><span style="letter-spacing:-0.380px">Серия</span></span><span class="c t" style="left:346px"><span style="letter-spacing:-0.163px">Серия номенклатуры</span></span><span class="c t" style="left:644px">Искать</span><span class="c t" style="left:926px"></span><span class="c t" style="left:1223px"><span style="letter-spacing:-0.148px">Искать по Наименование</span></span></div>
<div class="tr" style="top:907px"><span class="c" style="left:9px;top:4px"><svg class="ck" width="18" height="18" viewBox="0 0 18 18"><rect x="0.500" y="2.500" width="14" height="14" rx="2" fill="#fff" stroke="#a3a3a3"/><path d="M3.300 7.700 L6.900 11.800 L15.300 1.700" fill="none" stroke="#0b9a47" stroke-width="2.300"/></svg></span><span class="c t" style="left:75px">Статус указания серий</span><span class="c t" style="left:346px">Число</span><span class="c t" style="left:644px">Искать</span><span class="c t" style="left:926px"></span><span class="c t" style="left:1223px"></span></div>
<div class="tr" style="top:936px"><span class="c" style="left:9px;top:4px"><svg class="ck" width="18" height="18" viewBox="0 0 18 18"><rect x="0.500" y="2.500" width="14" height="14" rx="2" fill="#fff" stroke="#a3a3a3"/><path d="M3.300 7.700 L6.900 11.800 L15.300 1.700" fill="none" stroke="#0b9a47" stroke-width="2.300"/></svg></span><span class="c t" style="left:75px"><span style="letter-spacing:-0.116px">Аналитика учета номенклатуры</span></span><span class="c t" style="left:346px">Ключ аналитики учета номенклатуры</span><span class="c t" style="left:644px">Искать</span><span class="c t" style="left:926px"></span><span class="c t" style="left:1223px"><span style="letter-spacing:-0.148px">Искать по Наименование</span></span></div>
<div class="tr" style="top:965px"><span class="c" style="left:9px;top:4px"><svg class="ck" width="18" height="18" viewBox="0 0 18 18"><rect x="0.500" y="2.500" width="14" height="14" rx="2" fill="#fff" stroke="#a3a3a3"/><path d="M3.300 7.700 L6.900 11.800 L15.300 1.700" fill="none" stroke="#0b9a47" stroke-width="2.300"/></svg></span><span class="c t" style="left:75px">Подразделение-получатель</span><span class="c t" style="left:346px">Подразделение</span><span class="c t" style="left:644px">Искать</span><span class="c t" style="left:926px"></span><span class="c t" style="left:1223px"><span style="letter-spacing:-0.148px">Искать по Наименование</span></span></div>
<div class="tr last" style="top:994px"><span class="c" style="left:9px;top:4px"><svg class="ck" width="18" height="18" viewBox="0 0 18 18"><rect x="0.500" y="2.500" width="14" height="14" rx="2" fill="#fff" stroke="#a3a3a3"/><path d="M3.300 7.700 L6.900 11.800 L15.300 1.700" fill="none" stroke="#0b9a47" stroke-width="2.300"/></svg></span><span class="c t" style="left:75px"><span style="letter-spacing:0.003px">Списать на расходы</span></span><span class="c t" style="left:346px">Булево</span><span class="c t" style="left:644px">Искать</span><span class="c t" style="left:926px">Нет</span><span class="c t" style="left:1223px"></span></div>
<!-- selected row: cell being edited -->
<div class="abs" style="left:1451px;top:327px;width:424px;height:28px;background:#fff"></div>
<div class="abs" style="left:1833px;top:327px;width:1px;height:28px;background:#a9a9a9"></div>
<div class="abs" style="left:1854px;top:327px;width:1px;height:28px;background:#a9a9a9"></div>
<span class="abs" style="left:1840px;top:333px;line-height:16px;font-size:12px;color:#333;letter-spacing:-0.5px">...</span>
<svg class="abs" style="left:1862px;top:338px" width="6" height="6" viewBox="0 0 6 6"><path d="M0.400 0.400l5.200 5.200M5.600 0.400L0.400 5.600" stroke="#333" stroke-width="1"/></svg>
<!-- scrollbar -->
<svg class="abs" style="left:1879px;top:305px" width="6" height="4" viewBox="0 0 6 4"><path d="M0 4h6L3 0z" fill="#c8c8c8"/></svg>
<div class="abs" style="left:1878px;top:319px;width:8px;height:675px;border-radius:4px;background:#d6d6d6"></div>
<div class="abs" style="left:1878px;top:319px;width:8px;height:593px;border-radius:4px;background:#9c9c9c"></div>
<svg class="abs" style="left:1879px;top:1004px" width="6" height="4" viewBox="0 0 6 4"><path d="M0 0h6L3 4z" fill="#444"/></svg>

<!-- ===== modal dialog ===== -->
<div id="dlg">
  <div class="abs" style="left:8px;top:6px;width:16px;height:16px;border-radius:3px;background:linear-gradient(#ffe34f,#ffd500)"></div>
  <span class="abs" style="left:29px;top:7px;font-size:12px;line-height:16px;color:#000;white-space:pre;letter-spacing:-0.09px">Редактирование связи поиска: Загрузка данных из табличного документа (...</span>
  <svg class="abs" style="left:473px;top:9px" width="11" height="11" viewBox="0 0 11 11"><path d="M0 5.500h11" stroke="#222" stroke-width="1"/></svg>
  <svg class="abs" style="left:518px;top:9px" width="11" height="11" viewBox="0 0 11 11"><rect x="0.500" y="0.500" width="9" height="9" fill="none" stroke="#222"/></svg>
  <svg class="abs" style="left:563px;top:9px" width="11" height="11" viewBox="0 0 11 11"><path d="M0.500 0.500l10 10M10.500 0.500l-10 10" stroke="#222" stroke-width="1.100"/></svg>
  <div class="abs" style="left:12px;top:39px;font-size:18.670px;line-height:24px;color:#000;white-space:pre;letter-spacing:-0.03px">Редактирование связи поиска: Загрузка данных из табличн<span style="font-size:16.500px">…</span></div>
  <svg class="abs" style="left:570px;top:45px" width="5" height="12" viewBox="0 0 5 12"><circle cx="2.600" cy="1.700" r="1.500" fill="#7a7a7a"/><circle cx="2.600" cy="5.900" r="1.500" fill="#7a7a7a"/><circle cx="2.600" cy="9.900" r="1.500" fill="#7a7a7a"/></svg>
  <span class="abs" style="left:12px;top:78px;line-height:16px;color:#444;white-space:pre">Искать по:</span>
  <div class="abs" style="left:77px;top:70px;width:416px;height:31px;border:2px solid #f9c822;background:#fff"><span class="abs" style="left:4px;top:5px;line-height:16px;background:#5068c6;color:#fff;white-space:pre">Наименование</span></div>
  <div class="btn" style="left:445px;top:107px;width:46px;height:26px;line-height:24px;background:linear-gradient(#ffe41a,#f3cf00);border-color:#c9a600;color:#3a3000;font-weight:bold">ОК</div>
  <div class="btn" style="left:500px;top:107px;width:73px;height:26px;line-height:24px">Отмена</div>
</div>

</body>
</html>
